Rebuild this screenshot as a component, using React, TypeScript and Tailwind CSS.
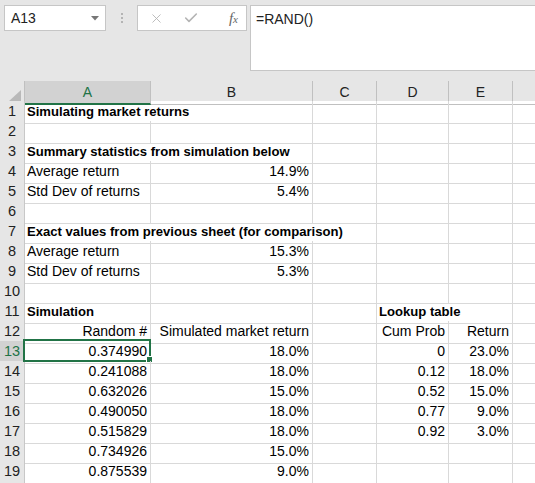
import { X, Check } from 'lucide-react'

// Excel-style sheet: formula bar on top, grid of cells below.
// Grid is one CSS grid per row, same column template, so spans line up.

type Cell = { text?: string; span?: 1 | 2 | 3; right?: boolean; bold?: boolean }

const ROWS: Cell[][] = [
  [{ text: 'Simulating market returns', bold: true, span: 2 }, {}, {}, {}, {}],
  [{}, {}, {}, {}, {}, {}],
  [{ text: 'Summary statistics from simulation below', bold: true, span: 2 }, {}, {}, {}, {}],
  [{ text: 'Average return' }, { text: '14.9%', right: true }, {}, {}, {}, {}],
  [{ text: 'Std Dev of returns' }, { text: '5.4%', right: true }, {}, {}, {}, {}],
  [{}, {}, {}, {}, {}, {}],
  [{ text: 'Exact values from previous sheet (for comparison)', bold: true, span: 3 }, {}, {}, {}],
  [{ text: 'Average return' }, { text: '15.3%', right: true }, {}, {}, {}, {}],
  [{ text: 'Std Dev of returns' }, { text: '5.3%', right: true }, {}, {}, {}, {}],
  [{}, {}, {}, {}, {}, {}],
  [{ text: 'Simulation', bold: true }, {}, {}, { text: 'Lookup table', bold: true, span: 2 }, {}],
  [
    { text: 'Random #', right: true },
    { text: 'Simulated market return', right: true },
    {},
    { text: 'Cum Prob', right: true },
    { text: 'Return', right: true },
    {},
  ],
  [{ text: '0.374990', right: true }, { text: '18.0%', right: true }, {}, { text: '0', right: true }, { text: '23.0%', right: true }, {}],
  [{ text: '0.241088', right: true }, { text: '18.0%', right: true }, {}, { text: '0.12', right: true }, { text: '18.0%', right: true }, {}],
  [{ text: '0.632026', right: true }, { text: '15.0%', right: true }, {}, { text: '0.52', right: true }, { text: '15.0%', right: true }, {}],
  [{ text: '0.490050', right: true }, { text: '18.0%', right: true }, {}, { text: '0.77', right: true }, { text: '9.0%', right: true }, {}],
  [{ text: '0.515829', right: true }, { text: '18.0%', right: true }, {}, { text: '0.92', right: true }, { text: '3.0%', right: true }, {}],
  [{ text: '0.734926', right: true }, { text: '15.0%', right: true }, {}, {}, {}, {}],
  [{ text: '0.875539', right: true }, { text: '9.0%', right: true }, {}, {}, {}, {}],
  [{}, {}, {}, {}, {}, {}],
]

const COLS = ['A', 'B', 'C', 'D', 'E', '']
const GRID = 'grid grid-cols-[25px_126px_162px_64px_72px_64px_1fr]'

export default function App() {
  return (
    <div className="w-[535px] h-[483px] overflow-hidden bg-white font-['Liberation_Sans',Arial,sans-serif] text-[14px] text-black">
      <FormulaBar />
      <HeaderRow />
      {ROWS.map((row, i) => (
        <SheetRow key={i} n={i + 1} cells={row} />
      ))}
    </div>
  )
}

// ─── Formula bar ────────────────────────────────────────────────────

function FormulaBar() {
  return (
    <div className="h-[81px] bg-[#e6e6e6] flex items-start pt-[5px] pl-[4px]">
      <div className="w-[102px] h-[26px] bg-white border border-[#c6c6c6] flex items-center justify-between pl-[6px] pr-[6px]">
        <span className="text-[14px] text-[#222]">A13</span>
        <svg width="8" height="5" viewBox="0 0 8 5">
          <polygon points="0,0 8,0 4,4.5" fill="#777" />
        </svg>
      </div>
      <div className="w-[31px] h-[26px] flex flex-col items-center justify-center gap-[2px]">
        <div className="w-[2px] h-[2px] bg-[#b4b4b4]" />
        <div className="w-[2px] h-[2px] bg-[#b4b4b4]" />
        <div className="w-[2px] h-[2px] bg-[#b4b4b4]" />
      </div>
      <div className="w-[110px] h-[26px] bg-white border border-[#c6c6c6] flex items-center pl-[11px] pr-[8px]">
        <X size={15} strokeWidth={1.4} className="text-[#b4b4b4]" />
        <Check size={16} strokeWidth={2.4} className="text-[#b4b4b4] ml-[19px]" />
        <span className="ml-auto font-['Liberation_Serif',serif] italic text-[#666] text-[15px] leading-none">
          f<span className="text-[11px]">x</span>
        </span>
      </div>
      <div className="ml-[3px] flex-1 h-[66px] bg-white border border-[#c6c6c6] border-r-0 pl-[5px] pt-[3px]">
        <span className="text-[14px] text-[#222]">=RAND()</span>
      </div>
    </div>
  )
}

// ─── Column header row ──────────────────────────────────────────────

function HeaderRow() {
  return (
    <div className={`${GRID} h-[20px] bg-[#e6e6e6]`}>
      <div className="border-r border-b border-[#c0c0c0] flex items-end justify-end pr-[3px] pb-[2px]">
        <svg width="13" height="12" viewBox="0 0 13 12">
          <polygon points="13,0 13,12 0,12" fill="#b9b9b9" />
        </svg>
      </div>
      {COLS.map((c, i) =>
        i === 0 ? (
          <div
            key={c}
            className="bg-[#d2d2d2] border-r border-[#c0c0c0] border-b-2 border-b-[#217346] flex items-center justify-center text-[#217346] pt-[1px]"
          >
            {c}
          </div>
        ) : (
          <div
            key={i}
            className={`${c ? 'border-r' : ''} border-b border-[#c0c0c0] flex items-center justify-center text-[#222]`}
          >
            {c}
          </div>
        ),
      )}
    </div>
  )
}

// ─── Sheet rows ─────────────────────────────────────────────────────

function SheetRow({ n, cells }: { n: number; cells: Cell[] }) {
  const active = n === 13
  // row 20 only peeks in at the bottom edge, its number sits below the fold
  const label = n <= 19 ? n : ''
  return (
    <div className={`${GRID} h-[20px]`}>
      <div
        className={[
          'border-r border-b border-[#c8c8c8] flex items-center justify-center text-[14.5px]',
          active ? 'bg-[#d2d2d2] text-[#217346]' : 'bg-[#e6e6e6] text-[#222]',
        ].join(' ')}
      >
        {label}
      </div>
      {cells.map((c, i) => (
        <div
          key={i}
          className={[
            'relative border-b border-[#d9d9d9] flex items-center whitespace-nowrap overflow-visible',
            i === cells.length - 1 ? '' : 'border-r',
            c.span === 2 ? 'col-span-2' : c.span === 3 ? 'col-span-3' : '',
            c.right ? 'justify-end pr-[3px]' : 'pl-[2px]',
            c.bold ? 'font-bold text-[13.1px]' : '',
          ].join(' ')}
        >
          {c.text}
          {active && i === 0 && (
            <>
              <div className="absolute -left-[2px] -top-[2px] w-[128px] h-[23px] border-2 border-[#217346] pointer-events-none" />
              <div className="absolute left-[121px] top-[15px] w-[7px] h-[7px] bg-[#217346] border border-white" />
            </>
          )}
        </div>
      ))}
    </div>
  )
}
